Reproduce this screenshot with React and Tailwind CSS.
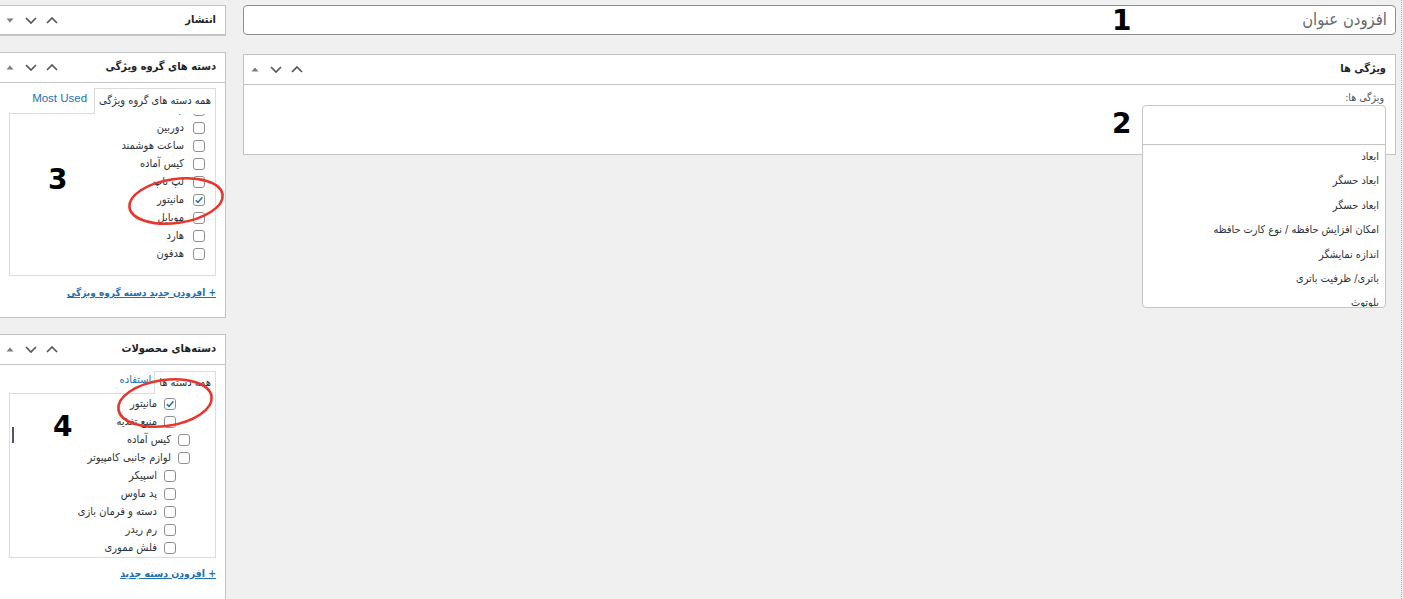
import React from "react";

const F = { fontFamily: "'DejaVu Sans Condensed', 'DejaVu Sans', 'Liberation Sans', sans-serif" };

function TriUp() {
  return (
    <svg width="8" height="5" viewBox="0 0 8 5"><path d="M0.5 4.5 L4 0.5 L7.5 4.5 Z" fill="#787c82" /></svg>
  );
}
function TriDown() {
  return (
    <svg width="8" height="5" viewBox="0 0 8 5"><path d="M0.5 0.5 L4 4.5 L7.5 0.5 Z" fill="#787c82" /></svg>
  );
}
function ChevDown() {
  return (
    <svg width="12" height="7" viewBox="0 0 12 7"><path d="M1 1 L6 6 L11 1" stroke="#50575e" strokeWidth="1.7" fill="none" /></svg>
  );
}
function ChevUp() {
  return (
    <svg width="12" height="7" viewBox="0 0 12 7"><path d="M1 6 L6 1 L11 6" stroke="#50575e" strokeWidth="1.7" fill="none" /></svg>
  );
}

function Controls({ down }) {
  return (
    <div className="flex items-center h-full">
      <div className="w-[21px] flex justify-center">{down ? <TriDown /> : <TriUp />}</div>
      <div className="w-[21px] flex justify-center"><ChevDown /></div>
      <div className="w-[21px] flex justify-center"><ChevUp /></div>
    </div>
  );
}

function Header({ title, down, h = "h-[30px]" }) {
  return (
    <div className={`${h} flex items-center justify-between border-b border-[#c3c4c7]`}>
      <Controls down={down} />
      <div dir="rtl" className="pr-[9px] text-[11px] font-bold font-stretch-condensed text-[#1d2327]">{title}</div>
    </div>
  );
}

function Check({ checked }) {
  return (
    <span className="w-[12px] h-[12px] flex-none rounded-[3px] border border-[#8c8f94] bg-white flex items-center justify-center">
      {checked ? (
        <svg width="10" height="10" viewBox="0 0 10 10"><path d="M1.8 5.2 L4 7.4 L8.4 2.2" stroke="#2271b1" strokeWidth="1.6" fill="none" /></svg>
      ) : null}
    </span>
  );
}

function Row({ label, checked, pr, gap }) {
  return (
    <div dir="rtl" className={`h-[18px] flex items-center ${pr} ${gap} text-[11px] font-stretch-condensed text-[#2c3338]`}>
      <Check checked={checked} />
      <span className="whitespace-nowrap">{label}</span>
    </div>
  );
}

const groupItems = ["تبلت", "دوربین", "ساعت هوشمند", "کیس آماده", "لپ تاپ", "مانیتور", "موبایل", "هارد", "هدفون"];

const productItems = [
  { l: "مانیتور", c: true, child: true },
  { l: "منبع تغذیه", child: true },
  { l: "کیس آماده" },
  { l: "لوازم جانبی کامپیوتر" },
  { l: "اسپیکر", child: true },
  { l: "پد ماوس", child: true },
  { l: "دسته و فرمان بازی", child: true },
  { l: "رم ریدر", child: true },
  { l: "فلش مموری", child: true },
];

const features = ["ابعاد", "ابعاد حسگر", "ابعاد حسگر", "امکان افزایش حافظه / نوع کارت حافظه", "اندازه نمایشگر", "باتری/ ظرفیت باتری", "بلوتوث"];

export default function App() {
  return (
    <div style={F} className="relative w-[1403px] h-[599px] overflow-hidden bg-[#f0f0f1] flex items-start">
      {/* Sidebar */}
      <div className="w-[228px] -ml-[2px] pt-[5px] flex flex-col gap-[16px] flex-none">
        <div className="h-[31px] bg-white border border-[#c3c4c7]">
          <Header title="انتشار" down h="h-[29px]" />
        </div>

        <div className="h-[266px] bg-white border border-[#c3c4c7]">
          <Header title="دسته های گروه ویژگی" />
          <div className="pl-[10px] pr-[9px] pt-[5px]">
            <div className="flex items-end justify-end gap-[7px]">
              <span className="pb-[6px] text-[11.5px] text-[#2271b1]" style={{ fontFamily: "'Liberation Sans', sans-serif" }}>Most Used</span>
              <div dir="rtl" className="h-[26px] -mb-px relative z-10 bg-white border border-b-0 border-[#dcdcde] px-[4px] flex items-center text-[11px] font-stretch-condensed text-[#2c3338] whitespace-nowrap">همه دسته های گروه ویژگی</div>
            </div>
            <div className="h-[163px] border border-[#dcdcde] overflow-hidden">
              <div className="-mt-[13px]">
                {groupItems.map((l, i) => (
                  <Row key={i} label={l} checked={l === "مانیتور"} pr="pr-[10px]" gap="gap-[9px]" />
                ))}
              </div>
            </div>
            <div dir="rtl" className="pt-[9px] text-[10px] font-bold font-stretch-condensed text-[#2271b1] underline">+ افزودن جدید دسته گروه ویژگی</div>
          </div>
        </div>

        <div className="h-[300px] bg-white border border-[#c3c4c7]">
          <Header title="دسته‌های محصولات" />
          <div className="pl-[10px] pr-[9px] pt-[6px]">
            <div className="flex items-end justify-end gap-[3px]">
              <span dir="rtl" className="pb-[5px] text-[11px] font-stretch-condensed text-[#2271b1]">استفاده</span>
              <div dir="rtl" className="h-[23px] -mb-px relative z-10 bg-white border border-b-0 border-[#dcdcde] px-[4px] flex items-center text-[11px] font-stretch-condensed text-[#2c3338] whitespace-nowrap">همه دسته ها</div>
            </div>
            <div className="h-[165px] border border-[#dcdcde] overflow-hidden pt-[1px]">
              {productItems.map((it, i) => (
                <Row key={i} label={it.l} checked={it.c} pr={it.child ? "pr-[39px]" : "pr-[25px]"} gap="gap-[7px]" />
              ))}
            </div>
            <div dir="rtl" className="pt-[8px] text-[10.4px] font-bold font-stretch-condensed text-[#2271b1] underline">+ افزودن دسته جدید</div>
          </div>
        </div>
      </div>

      {/* Main */}
      <div className="ml-[17px] w-[1153px] pt-[5px] flex-none">
        <div className="h-[30px] bg-white border border-[#8c8f94] rounded-[4px] flex items-center justify-end pr-[8px]">
          <span dir="rtl" className="text-[16.5px] font-stretch-condensed text-[#646970]">افزودن عنوان</span>
        </div>

        <div className="mt-[19px] h-[101px] bg-white border border-[#c3c4c7]">
          <Header title="ویژگی ها" />
          <div className="flex flex-col items-end pr-[9px]">
            <div dir="rtl" className="pt-[5px] pr-[2px] h-[20px] text-[10.5px] font-stretch-condensed text-[#50575e]">ویژگی ها:</div>
            <div className="relative w-[244px]">
              <div className="h-[40px] bg-white border border-[#c3c4c7] rounded-t-[4px]" />
              <div className="absolute z-20 left-0 right-0 top-[39px] h-[164px] bg-white border border-[#c3c4c7] rounded-b-[4px] overflow-hidden">
                {features.map((f, i) => (
                  <div key={i} dir="rtl" className="h-[24.4px] flex items-center pr-[6px] text-[10.9px] font-stretch-condensed text-[#2c3338] whitespace-nowrap">{f}</div>
                ))}
              </div>
            </div>
          </div>
        </div>
      </div>

      <div className="ml-auto mr-[1px] w-[1px] h-full border-l border-dotted border-[#a7aaad]" />

      {/* Annotations */}
      <div style={{ fontFamily: "'DejaVu Sans', sans-serif" }} className="absolute left-[1112px] top-[7px] text-[28px] font-bold leading-none text-black">1</div>
      <div style={{ fontFamily: "'DejaVu Sans', sans-serif" }} className="absolute left-[1112px] top-[110px] text-[28px] font-bold leading-none text-black">2</div>
      <div style={{ fontFamily: "'DejaVu Sans', sans-serif" }} className="absolute left-[48px] top-[166px] text-[28px] font-bold leading-none text-black">3</div>
      <div style={{ fontFamily: "'DejaVu Sans', sans-serif" }} className="absolute left-[53px] top-[413px] text-[28px] font-bold leading-none text-black">4</div>
      <div className="absolute left-[12px] top-[427px] w-[2px] h-[16px] bg-[#50575e]" />
      <svg className="absolute inset-0 pointer-events-none z-30" width="1403" height="599">
        <ellipse cx="176" cy="201" rx="47" ry="22" transform="rotate(-8 176 201)" fill="none" stroke="#e8362e" strokeWidth="2.6" />
        <ellipse cx="165" cy="403" rx="47" ry="23" transform="rotate(-8 165 403)" fill="none" stroke="#e8362e" strokeWidth="2.6" />
      </svg>
    </div>
  );
}
